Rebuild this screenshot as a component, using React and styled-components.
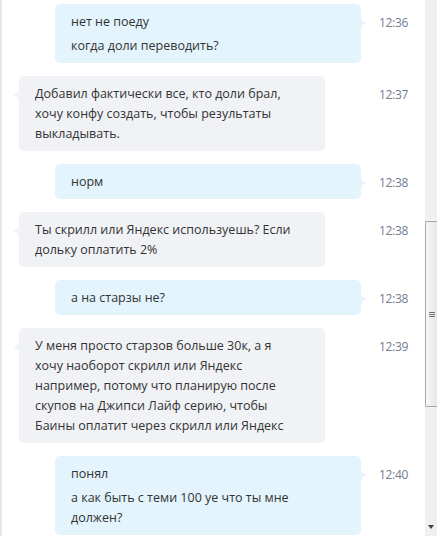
import React from "react";
import styled, { createGlobalStyle } from "styled-components";

const messages = [
  { out: true, time: "12:36", parts: ["нет не поеду", "когда доли переводить?"] },
  { out: false, time: "12:37", parts: ["Добавил фактически все, кто доли брал, хочу конфу создать, чтобы результаты выкладывать."] },
  { out: true, time: "12:38", parts: ["норм"] },
  { out: false, time: "12:38", parts: ["Ты скрилл или Яндекс используешь? Если дольку оплатить 2%"] },
  { out: true, time: "12:38", parts: ["а на старзы не?"] },
  {
    out: false,
    time: "12:39",
    parts: [
      "У меня просто старзов больше 30к, а я хочу наоборот скрилл или Яндекс например, потому что планирую после скупов на Джипси Лайф серию, чтобы Баины оплатит через скрилл или Яндекс",
    ],
  },
  { out: true, time: "12:40", parts: ["понял", "а как быть с теми 100 уе что ты мне должен?"] },
];

const App = () => {
  return (
    <>
      <GlobalStyle />
      <Window>
        <Conversation>
          {messages.map((m, i) => (
            <Row key={i}>
              <Bubble $out={m.out}>
                <Tail $out={m.out} viewBox="0 0 6 14" width="6" height="14">
                  {m.out ? (
                    <path d="M0 0 C0 4 2 6 6 7 C2 8 0 10 0 14 Z" />
                  ) : (
                    <path d="M6 0 C6 4 4 6 0 7 C4 8 6 10 6 14 Z" />
                  )}
                </Tail>
                {m.parts.map((p, j) => (
                  <Text key={j}>{p}</Text>
                ))}
              </Bubble>
              <Time>{m.time}</Time>
            </Row>
          ))}
        </Conversation>
        <ScrollTrack>
          <Thumb>
            <Grip />
          </Thumb>
          <ArrowDown />
        </ScrollTrack>
      </Window>
    </>
  );
};

export default App;

/* styles */

const GlobalStyle = createGlobalStyle`
  html, body {
    margin: 0;
    padding: 0;
    background: #ffffff;
  }
  body {
    font-family: "Open Sans", "Noto Sans", sans-serif;
  }
`;

const Window = styled.div`
  display: flex;
  width: 437px;
  height: 536px;
  overflow: hidden;
  border-left: 2px solid #dfe7ef;
  box-sizing: border-box;
`;

const Conversation = styled.div`
  flex: 1;
  display: flex;
  flex-direction: column;
  gap: 13px;
  padding-top: 4px;
  overflow: hidden;
`;

const Row = styled.div`
  display: grid;
  grid-template-columns: 359px auto;
  column-gap: 18px;
  align-items: start;
`;

const Bubble = styled.div`
  position: relative;
  justify-self: ${(p) => (p.$out ? "end" : "start")};
  margin-left: ${(p) => (p.$out ? "0" : "17px")};
  width: 306px;
  box-sizing: border-box;
  padding: 8px 32px 7px 16px;
  border-radius: 5px;
  background: ${(p) => (p.$out ? "#e3f4fc" : "#f0f2f6")};
  display: flex;
  flex-direction: column;
  gap: 4px;
`;

const Tail = styled.svg`
  position: absolute;
  top: 12px;
  ${(p) => (p.$out ? "right: -6px;" : "left: -6px;")}
  fill: ${(p) => (p.$out ? "#e3f4fc" : "#f0f2f6")};
`;

const Text = styled.div`
  font-size: 12.5px;
  line-height: 20px;
  color: #333333;
`;

const Time = styled.div`
  padding-top: 9px;
  font-size: 12px;
  line-height: 20px;
  color: #6f7d8f;
  letter-spacing: -0.3px;
`;

const ScrollTrack = styled.div`
  width: 12px;
  flex: none;
  background: #f0f0f0;
  display: flex;
  flex-direction: column;
  align-items: stretch;
  padding-top: 221px;
  box-sizing: border-box;
`;

const Thumb = styled.div`
  height: 186px;
  box-sizing: border-box;
  border: 1px solid #a7a7a7;
  border-right: none;
  border-radius: 2px 0 0 2px;
  background: linear-gradient(to right, #f7f7f7, #e6e6e6);
  display: flex;
  align-items: center;
  justify-content: center;
`;

const Grip = styled.div`
  width: 6px;
  height: 5px;
  background: repeating-linear-gradient(
    to bottom,
    #707070 0,
    #707070 1px,
    transparent 1px,
    transparent 2px
  );
`;

const ArrowDown = styled.div`
  margin-top: auto;
  margin-bottom: 7px;
  align-self: center;
  width: 0;
  height: 0;
  border-left: 3.5px solid transparent;
  border-right: 3.5px solid transparent;
  border-top: 4px solid #404040;
`;
